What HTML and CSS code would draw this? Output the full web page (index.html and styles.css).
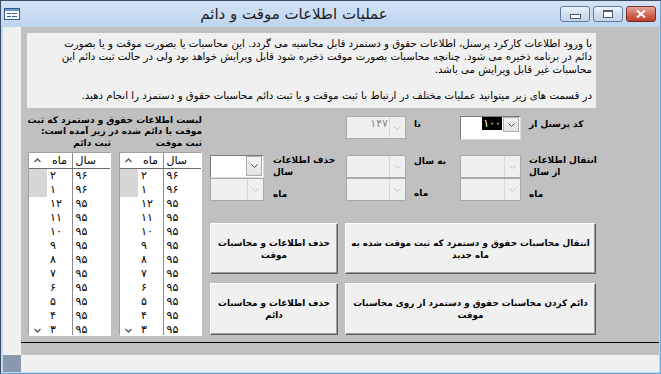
FILE: index.html
```html
<!DOCTYPE html>
<html lang="fa">
<head>
  <meta charset="UTF-8">
  <title>عملیات اطلاعات موقت و دائم</title>
  <link rel="stylesheet" href="styles.css">
</head>
<body>
  <div class="window">
    <div class="titlebar">
      <svg class="app-icon" width="16" height="12" viewBox="0 0 16 12">
        <rect x="0.5" y="0.5" width="15" height="11" fill="#fff" stroke="#2f5c94"/>
        <rect x="1" y="1" width="14" height="2" fill="#6e93c4"/>
        <rect x="3" y="5" width="4" height="1" fill="#2f5c94"/>
        <rect x="8" y="5" width="5" height="1" fill="#2f5c94"/>
        <rect x="3" y="8" width="4" height="1" fill="#2f5c94"/>
        <rect x="8" y="8" width="5" height="1" fill="#2f5c94"/>
      </svg>
      <div class="title">عملیات اطلاعات موقت و دائم</div>
      <div class="caption-buttons">
        <span class="cap-btn"><i class="min-glyph"></i></span>
        <span class="cap-btn"><i class="max-glyph"></i></span>
        <span class="cap-btn close">
          <svg width="10" height="8" viewBox="0 0 10 8"><path d="M1 0.5 L9 7.5 M9 0.5 L1 7.5" stroke="#fff" stroke-width="2"/></svg>
        </span>
      </div>
    </div>

    <div class="client">
      <div class="detail-row">
        <div class="selector"></div>
        <div class="detail">
          <div class="intro">
            <div class="line">با ورود اطلاعات کارکرد پرسنل، اطلاعات حقوق و دستمزد قابل محاسبه می گردد. این محاسبات یا بصورت موقت و یا بصورت</div>
            <div class="line">دائم در برنامه ذخیره می شود.  چنانچه محاسبات بصورت موقت ذخیره شود قابل ویرایش خواهد بود ولی در حالت ثبت دائم این</div>
            <div class="line">محاسبات غیر قابل ویرایش می باشد.</div>
            <div class="line">&nbsp;</div>
            <div class="line">در قسمت های زیر میتوانید عملیات مختلف در ارتباط با ثبت موقت و یا ثبت دائم محاسبات حقوق و دستمزد را انجام دهید.</div>
          </div>

          <div class="lower">
            <div class="lists-col">
              <div class="lists-title">لیست اطلاعات حقوق و دستمزد که ثبت<br>موقت یا دائم شده در زیر آمده است:</div>
              <div class="list-captions">
                <div class="caption">ثبت دائم</div>
                <div class="caption">ثبت موقت</div>
              </div>
              <div class="lists">
                <div class="listbox">
                  <table>
                    <thead>
                      <tr><th class="scroll"><svg class="arrow" width="7" height="5" viewBox="0 0 7 5"><path d="M0.5 4 L3.5 1 L6.5 4" fill="none" stroke="#555" stroke-width="1.3"/></svg></th><th class="month">ماه</th><th>سال</th></tr>
                    </thead>
                    <tbody>
                      <tr><td class="scroll thumb"></td><td>۲</td><td>۹۶</td></tr>
                      <tr><td class="scroll thumb"></td><td>۱</td><td>۹۶</td></tr>
                      <tr><td class="scroll"></td><td>۱۲</td><td>۹۵</td></tr>
                      <tr><td class="scroll"></td><td>۱۱</td><td>۹۵</td></tr>
                      <tr><td class="scroll"></td><td>۱۰</td><td>۹۵</td></tr>
                      <tr><td class="scroll"></td><td>۹</td><td>۹۵</td></tr>
                      <tr><td class="scroll"></td><td>۸</td><td>۹۵</td></tr>
                      <tr><td class="scroll"></td><td>۷</td><td>۹۵</td></tr>
                      <tr><td class="scroll"></td><td>۶</td><td>۹۵</td></tr>
                      <tr><td class="scroll"></td><td>۵</td><td>۹۵</td></tr>
                      <tr><td class="scroll"></td><td>۴</td><td>۹۵</td></tr>
                      <tr><td class="scroll"><svg class="arrow" width="7" height="5" viewBox="0 0 7 5"><path d="M0.5 1 L3.5 4 L6.5 1" fill="none" stroke="#555" stroke-width="1.3"/></svg></td><td>۳</td><td>۹۵</td></tr>
                    </tbody>
                  </table>
                </div>
                <div class="listbox">
                  <table>
                    <thead>
                      <tr><th class="scroll"><svg class="arrow" width="7" height="5" viewBox="0 0 7 5"><path d="M0.5 4 L3.5 1 L6.5 4" fill="none" stroke="#555" stroke-width="1.3"/></svg></th><th class="month">ماه</th><th>سال</th></tr>
                    </thead>
                    <tbody>
                      <tr><td class="scroll thumb"></td><td>۲</td><td>۹۶</td></tr>
                      <tr><td class="scroll thumb"></td><td>۱</td><td>۹۶</td></tr>
                      <tr><td class="scroll"></td><td>۱۲</td><td>۹۵</td></tr>
                      <tr><td class="scroll"></td><td>۱۱</td><td>۹۵</td></tr>
                      <tr><td class="scroll"></td><td>۱۰</td><td>۹۵</td></tr>
                      <tr><td class="scroll"></td><td>۹</td><td>۹۵</td></tr>
                      <tr><td class="scroll"></td><td>۸</td><td>۹۵</td></tr>
                      <tr><td class="scroll"></td><td>۷</td><td>۹۵</td></tr>
                      <tr><td class="scroll"></td><td>۶</td><td>۹۵</td></tr>
                      <tr><td class="scroll"></td><td>۵</td><td>۹۵</td></tr>
                      <tr><td class="scroll"></td><td>۴</td><td>۹۵</td></tr>
                      <tr><td class="scroll"><svg class="arrow" width="7" height="5" viewBox="0 0 7 5"><path d="M0.5 1 L3.5 4 L6.5 1" fill="none" stroke="#555" stroke-width="1.3"/></svg></td><td>۳</td><td>۹۵</td></tr>
                    </tbody>
                  </table>
                </div>
              </div>
            </div>

            <div class="controls">
              <div class="row row-a">
                <div class="group g1"></div>
                <div class="group g2">
                  <div class="combo disabled w60">
                    <span class="value">۱۴۷</span>
                    <span class="drop"><svg width="7" height="4" viewBox="0 0 7 4"><path d="M0.5 0.5 L3.5 3.5 L6.5 0.5" fill="none" stroke="currentColor"/></svg></span>
                  </div>
                  <div class="label">تا</div>
                </div>
                <div class="group g3">
                  <div class="combo active w61">
                    <span class="value"><mark>۱۰۰</mark></span>
                    <span class="drop short"><svg width="7" height="4" viewBox="0 0 7 4"><path d="M0.5 0.5 L3.5 3.5 L6.5 0.5" fill="none" stroke="currentColor"/></svg></span>
                  </div>
                  <div class="label">کد پرسنل از</div>
                </div>
              </div>

              <div class="row row-b">
                <div class="group g1">
                  <div class="stack w54">
                    <div class="combo enabled">
                      <span class="value"></span>
                      <span class="drop"><svg width="7" height="4" viewBox="0 0 7 4"><path d="M0.5 0.5 L3.5 3.5 L6.5 0.5" fill="none" stroke="currentColor"/></svg></span>
                    </div>
                    <div class="combo disabled">
                      <span class="value"></span>
                      <span class="drop"><svg width="7" height="4" viewBox="0 0 7 4"><path d="M0.5 0.5 L3.5 3.5 L6.5 0.5" fill="none" stroke="currentColor"/></svg></span>
                    </div>
                  </div>
                  <div class="labels">
                    <div class="label two">حذف اطلاعات<br>سال</div>
                    <div class="label month-label">ماه</div>
                  </div>
                </div>
                <div class="group g2">
                  <div class="stack w60">
                    <div class="combo disabled">
                      <span class="value"></span>
                      <span class="drop"><svg width="7" height="4" viewBox="0 0 7 4"><path d="M0.5 0.5 L3.5 3.5 L6.5 0.5" fill="none" stroke="currentColor"/></svg></span>
                    </div>
                    <div class="combo disabled">
                      <span class="value"></span>
                      <span class="drop"><svg width="7" height="4" viewBox="0 0 7 4"><path d="M0.5 0.5 L3.5 3.5 L6.5 0.5" fill="none" stroke="currentColor"/></svg></span>
                    </div>
                  </div>
                  <div class="labels">
                    <div class="label one">به سال</div>
                    <div class="label month-label">ماه</div>
                  </div>
                </div>
                <div class="group g3">
                  <div class="stack w61">
                    <div class="combo disabled">
                      <span class="value"></span>
                      <span class="drop"><svg width="7" height="4" viewBox="0 0 7 4"><path d="M0.5 0.5 L3.5 3.5 L6.5 0.5" fill="none" stroke="currentColor"/></svg></span>
                    </div>
                    <div class="combo disabled">
                      <span class="value"></span>
                      <span class="drop"><svg width="7" height="4" viewBox="0 0 7 4"><path d="M0.5 0.5 L3.5 3.5 L6.5 0.5" fill="none" stroke="currentColor"/></svg></span>
                    </div>
                  </div>
                  <div class="labels">
                    <div class="label two">انتقال اطلاعات<br>از سال</div>
                    <div class="label month-label">ماه</div>
                  </div>
                </div>
              </div>

              <div class="buttons">
                <button class="btn">حذف اطلاعات و  محاسبات<br>موقت</button>
                <button class="btn">انتقال محاسبات حقوق و دستمزد که ثبت موقت شده به<br>ماه جدید</button>
                <button class="btn">حذف  اطلاعات و محاسبات<br>دائم</button>
                <button class="btn">دائم کردن محاسبات حقوق و دستمزد از روی محاسبات<br>موقت</button>
              </div>
            </div>
          </div>
        </div>
      </div>

      <div class="footer-row">
        <div class="selector"></div>
        <div class="footer"></div>
      </div>
      <div class="nav-row">
        <div class="selector current"></div>
        <div class="nav"></div>
      </div>
    </div>
  </div>
</body>
</html>
```

FILE: styles.css
```css
body {
  margin: 0;
  font-family: "DejaVu Sans", sans-serif;
  font-size: 11px;
  color: #000;
  background: #fff;
}
.window {
  width: 661px;
  height: 374px;
  box-sizing: border-box;
  display: flex;
  flex-direction: column;
  background: #c2d8ee;
  border: 1px solid #3b4d63;
  border-bottom-color: #6aa8d8;
  border-right-color: #6aa8d8;
}

/* title bar */
.titlebar {
  height: 26px;
  display: flex;
  align-items: center;
  padding: 0 4px 0 3px;
  background: linear-gradient(#d3e3f5, #bed4ed);
}
.app-icon {
  flex: none;
  margin-top: -1px;
}
.title {
  flex: 1;
  text-align: center;
  direction: rtl;
  font-size: 15px;
  color: #1c1c1c;
  padding-left: 8px;
}
.caption-buttons {
  display: flex;
  gap: 5px;
  align-self: flex-start;
  margin-top: 5px;
}
.cap-btn {
  width: 30px;
  height: 16px;
  box-sizing: border-box;
  border: 1px solid #5f7da3;
  border-radius: 3px;
  background: linear-gradient(#eef3fa, #d3e0ef 50%, #c2d3e8);
  display: flex;
  align-items: center;
  justify-content: center;
}
.cap-btn + .cap-btn {
  margin-left: -2px;
}
.min-glyph {
  width: 9px;
  height: 3px;
  margin-top: 5px;
  background: #fff;
  border: 1px solid #4b5b70;
}
.max-glyph {
  width: 8px;
  height: 5px;
  border: 1px solid #4b5b70;
  border-top-width: 2px;
  background: #fff;
}
.cap-btn.close {
  border-color: #7d2b22;
  background: linear-gradient(#e5a89c, #d06a57 50%, #c0402c);
}

/* client area */
.client {
  flex: 1;
  display: flex;
  flex-direction: column;
  margin: 0 1px 1px 2px;
  background: #f0f0f0;
}
.selector {
  width: 18px;
  flex: none;
  background: #f0f0f0;
}
.selector.current {
  background: #8a98ae;
}
.detail-row {
  height: 315px;
  display: flex;
}
.detail {
  flex: 1;
  background: #c0c0c0;
  padding: 6px 0 0 6px;
  box-sizing: border-box;
}
.footer-row {
  height: 13px;
  display: flex;
}
.footer {
  flex: 1;
  background: #c0c0c0;
  border-top: 1px solid #000;
}
.nav-row {
  flex: 1;
  display: flex;
}
.nav {
  flex: 1;
  background: #f0f0f0;
}

/* intro text */
.intro {
  width: 569px;
  height: 75px;
  box-sizing: border-box;
  background: #f0f0f0;
  direction: rtl;
  text-align: right;
  padding: 4px 4px 0 0;
  font-size: 10.2px;
  line-height: 13px;
}
.intro .line {
  white-space: nowrap;
}

.lower {
  display: flex;
  margin-top: 6px;
}

/* lists */
.lists-col {
  width: 175px;
  margin-left: 1px;
}
.lists-title {
  direction: rtl;
  text-align: right;
  font-weight: bold;
  font-size: 9px;
  line-height: 11px;
  white-space: nowrap;
  padding: 1px 1px 0 0;
}
.list-captions,
.lists {
  display: flex;
  gap: 8px;
}
.caption {
  width: 83px;
  direction: rtl;
  text-align: right;
  font-weight: bold;
  font-size: 9px;
  line-height: 13px;
}
.lists {
  margin-top: 2px;
}
.listbox {
  width: 83px;
  height: 184px;
  box-sizing: border-box;
  background: #fff;
  border: 1px solid;
  border-color: #a0a0a0 #fff #fff #a0a0a0;
  overflow: hidden;
}
.listbox table {
  width: 100%;
  border-collapse: collapse;
  table-layout: fixed;
}
.listbox th,
.listbox td {
  height: 14px;
  padding: 0 0 0 3px;
  text-align: left;
  font-weight: normal;
  line-height: 14px;
  white-space: nowrap;
}
.listbox th {
  height: 15px;
  border-bottom: 1px solid #6b6b6b;
}
.listbox th.month {
  padding-left: 5px;
}
.listbox th:nth-child(2),
.listbox td:nth-child(2) {
  width: 25px;
  border-right: 1px solid #8c8c8c;
  box-sizing: border-box;
}
.listbox .scroll {
  width: 18px;
  padding: 0;
  text-align: center;
}
.listbox .thumb {
  background: #d6d6d6;
}
.arrow {
  display: block;
  margin: 0 auto 0 5px;
}

/* controls */
.controls {
  margin-left: 7px;
  padding-top: 2px;
  width: 387px;
}
.row {
  display: flex;
}
.group {
  display: flex;
  gap: 8px;
}
.g1 {
  width: 136px;
}
.g2 {
  width: 114px;
}
.g1 .labels {
  margin-left: 1px;
}
.row-b {
  margin-top: 15px;
}
.label {
  direction: rtl;
  text-align: left;
  font-weight: bold;
  font-size: 9px;
  line-height: 12px;
  white-space: nowrap;
}
.row-a .label {
  margin-top: 2px;
}
.label.two {
  margin-top: -1px;
}
.label.one {
  margin-top: 0;
  height: 23px;
}
.label.two + .month-label {
  margin-top: 10px;
}
.label.one + .month-label {
  margin-top: 9px;
}
.w54 { width: 54px; }
.w60 { width: 60px; }
.w61 { width: 61px; }
.stack {
  display: flex;
  flex-direction: column;
}
.combo {
  height: 23px;
  box-sizing: border-box;
  display: flex;
  border: 1px solid #a9a9a9;
  background: #f0f0f0;
}
.combo .value {
  flex: 1;
  direction: rtl;
  text-align: right;
  padding: 1px 1px 0 0;
  line-height: 12px;
  color: #8d8d8d;
}
.combo .drop {
  width: 16px;
  flex: none;
  display: flex;
  align-items: center;
  justify-content: center;
  box-sizing: border-box;
  border-left: 1px solid #d8d8d8;
  color: #c2c2c2;
  background: #f0f0f0;
}
.combo.enabled,
.combo.active {
  background: #fff;
  border-color: #7a7a7a #dcdcdc #dcdcdc #7a7a7a;
}
.combo.enabled .drop,
.combo.active .drop {
  border: 1px solid #adadad;
  background: linear-gradient(#f4f4f4, #e2e2e2);
  color: #444;
  margin: 0 1px 0 0;
  height: 20px;
}
.combo.active {
  height: 24px;
}
.combo.active .drop.short {
  height: 15px;
}
.combo.active .value {
  color: #000;
  padding-top: 1px;
}
.combo mark {
  background: #000;
  color: #fff;
  padding: 0 1px;
}

/* buttons */
.buttons {
  margin-top: 22px;
  display: grid;
  grid-template-columns: 128px 251px;
  grid-template-rows: 51px 52px;
  column-gap: 7px;
  row-gap: 9px;
}
.btn {
  font-family: "DejaVu Sans", sans-serif;
  font-size: 8.8px;
  font-weight: bold;
  line-height: 12px;
  direction: rtl;
  background: #f0f0f0;
  border: 1px solid;
  border-color: #fff #5c5c5c #5c5c5c #fff;
  box-shadow: inset -1px -1px 0 #a0a0a0;
  padding: 0 2px;
  color: #000;
  white-space: nowrap;
  overflow: hidden;
}
```
